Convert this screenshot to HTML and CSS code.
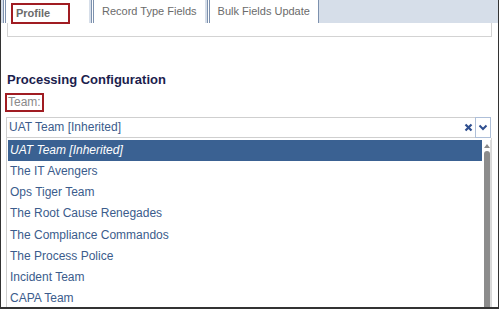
FILE: index.html
```html
<!DOCTYPE html>
<html>
<head>
<meta charset="utf-8">
<link rel="stylesheet" href="styles.css">
</head>
<body>
<div class="frame">
  <div class="tabs">
    <div class="tab tab-active"><span class="hl hl-tab">Profile</span></div>
    <div class="tab">Record Type Fields</div>
    <div class="tab tab-last">Bulk Fields Update</div>
  </div>
  <div class="panel"></div>
  <h2 class="section-title">Processing Configuration</h2>
  <div class="field-label"><span class="hl hl-label">Team:</span></div>
  <div class="select">
    <span class="select-value">UAT Team [Inherited]</span>
    <span class="select-btn select-clear">
      <svg width="9" height="9" viewBox="0 0 9 9"><path d="M1.5 1.5 L7.5 7.5 M7.5 1.5 L1.5 7.5" stroke="#2f4f8f" stroke-width="2.2" fill="none"/></svg>
    </span>
    <span class="select-btn select-arrow">
      <svg width="10" height="7" viewBox="0 0 10 7"><path d="M1.5 1.5 L5 5 L8.5 1.5" stroke="#2f4f8f" stroke-width="2" fill="none"/></svg>
    </span>
  </div>
  <div class="listbox">
    <ul class="options">
      <li class="option option-selected">UAT Team [Inherited]</li>
      <li class="option">The IT Avengers</li>
      <li class="option">Ops Tiger Team</li>
      <li class="option">The Root Cause Renegades</li>
      <li class="option">The Compliance Commandos</li>
      <li class="option">The Process Police</li>
      <li class="option">Incident Team</li>
      <li class="option">CAPA Team</li>
    </ul>
    <div class="scrollbar">
      <div class="scroll-up"></div>
      <div class="scroll-thumb"></div>
    </div>
  </div>
</div>
</body>
</html>
```
FILE: styles.css
```css
html, body {
  margin: 0;
  padding: 0;
  background: #fff;
}
.frame {
  box-sizing: border-box;
  width: 499px;
  height: 309px;
  border-left: 1px solid #333;
  border-right: 1px solid #333;
  border-bottom: 2px solid #333;
  overflow: hidden;
  font-family: "Liberation Sans", Arial, sans-serif;
  display: flex;
  flex-direction: column;
}
.tabs {
  display: flex;
  height: 23px;
  background: #d6dee9;
  padding-left: 2px;
  gap: 2px;
  flex-shrink: 0;
}
.tab {
  background: #fff;
  border-left: 3px double #7d91ae;
  color: #6b6b6b;
  font-size: 11px;
  line-height: 23px;
  padding: 0 8px 0 8px;
  white-space: nowrap;
}
.tab-active {
  width: 70px;
  padding-left: 5px;
  font-weight: bold;
}
.tab-last {
  border-right: 1px solid #7d91ae;
}
.hl {
  display: inline-block;
  border: 2px solid #a01c22;
  box-sizing: border-box;
}
.hl-tab {
  width: 59px;
  height: 21px;
  line-height: 17px;
  padding-left: 3px;
  margin-top: 3px;
  vertical-align: top;
}
.panel {
  height: 13px;
  margin: 0 6px 0 6px;
  border: 1px solid #d3d3d3;
  border-top: none;
  flex-shrink: 0;
}
.section-title {
  margin: 35px 0 0 6px;
  font-size: 13px;
  line-height: 15px;
  font-weight: bold;
  color: #1b1d4d;
}
.field-label {
  margin: 6px 0 0 4px;
  height: 19px;
  font-size: 12px;
}
.hl-label {
  height: 19px;
  line-height: 15px;
  padding: 0 1px 0 1px;
  color: #8a8a8a;
}
.select {
  margin: 5px 7px 0 5px;
  height: 21px;
  box-sizing: border-box;
  border: 1px solid #cfcfcf;
  display: flex;
  align-items: stretch;
  flex-shrink: 0;
}
.select-value {
  flex: 1;
  font-size: 12px;
  line-height: 19px;
  padding-left: 2px;
  color: #3b5c8c;
}
.select-btn {
  width: 14px;
  display: flex;
  align-items: center;
  justify-content: center;
  border-left: 1px solid #aebfd8;
}
.select-clear {
  border-left: none;
}
.select-arrow {
  border: 1px solid #aebfd8;
  margin: -1px -1px -1px 0;
}
.listbox {
  margin: 0 6px 0 5px;
  flex: 1;
  border-left: 1px solid #cfcfcf;
  border-right: 1px solid #d8d8d8;
  display: flex;
  overflow: hidden;
}
.options {
  list-style: none;
  margin: 0;
  padding: 2px 0 0 1px;
  flex: 1;
}
.option {
  height: 21.2px;
  line-height: 21px;
  font-size: 12px;
  color: #3b5c8c;
  padding-left: 2px;
  white-space: nowrap;
}
.option-selected {
  height: 21px;
  background: #3a6192;
  color: #fff;
  font-style: italic;
}
.scrollbar {
  width: 7px;
  margin: 2px 0 0 1px;
  display: flex;
  flex-direction: column;
  align-items: flex-start;
  border-right: 1px solid #dcdcdc;
}
.scroll-up {
  width: 0;
  height: 0;
  margin: 4px 0 0 1px;
  border-left: 3px solid transparent;
  border-right: 3px solid transparent;
  border-bottom: 4px solid #8a8a8a;
}
.scroll-thumb {
  margin: 3px 0 0 1px;
  width: 6px;
  flex: 1;
  background: #8c8c8c;
  border-radius: 3px 3px 0 0;
}
```
